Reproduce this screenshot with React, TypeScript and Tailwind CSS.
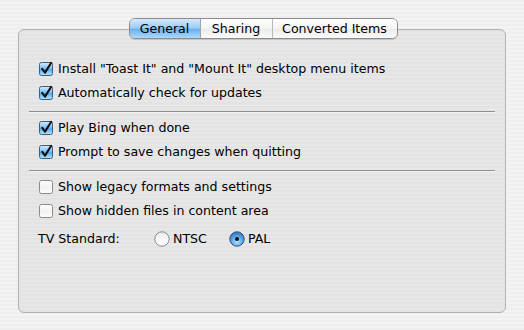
import React from "react";

const font = { fontFamily: '"Lucida Grande", "DejaVu Sans", sans-serif' };

function CheckBox({ checked }: { checked: boolean }) {
  return (
    <svg width="15" height="15" viewBox="0 0 15 15" className="shrink-0 overflow-visible">
      <defs>
        <linearGradient id="cbBlue" x1="0" y1="0" x2="0" y2="1">
          <stop offset="0" stopColor="#d6ecfd" />
          <stop offset="0.45" stopColor="#7fc0f3" />
          <stop offset="0.55" stopColor="#5aa8ec" />
          <stop offset="1" stopColor="#b5e6ff" />
        </linearGradient>
        <linearGradient id="cbWhite" x1="0" y1="0" x2="0" y2="1">
          <stop offset="0" stopColor="#ffffff" />
          <stop offset="0.5" stopColor="#f1f1f1" />
          <stop offset="1" stopColor="#fdfdfd" />
        </linearGradient>
      </defs>
      <rect
        x="0.5"
        y="0.5"
        width="13"
        height="13"
        rx="2"
        fill={checked ? "url(#cbBlue)" : "url(#cbWhite)"}
        stroke={checked ? "#3d5d7e" : "#8a8a8a"}
      />
      {checked && (
        <path d="M3.2 6.8 L6 10.6 L12.2 0.8" fill="none" stroke="#111" strokeWidth="2.1" strokeLinecap="round" strokeLinejoin="round" />
      )}
    </svg>
  );
}

function Radio({ checked }: { checked: boolean }) {
  return (
    <svg width="16" height="16" viewBox="0 0 16 16" className="shrink-0">
      <defs>
        <radialGradient id="rbBlue" cx="0.5" cy="0.7" r="0.6">
          <stop offset="0" stopColor="#b8e4ff" />
          <stop offset="0.6" stopColor="#5ea9ec" />
          <stop offset="1" stopColor="#3b7fcf" />
        </radialGradient>
        <linearGradient id="rbWhite" x1="0" y1="0" x2="0" y2="1">
          <stop offset="0" stopColor="#e9e9e9" />
          <stop offset="0.5" stopColor="#f7f7f7" />
          <stop offset="1" stopColor="#ffffff" />
        </linearGradient>
      </defs>
      <circle cx="8" cy="8" r="7.2" fill={checked ? "url(#rbBlue)" : "url(#rbWhite)"} stroke={checked ? "#2f4f78" : "#8a8a8a"} strokeWidth="1" />
      {checked && <circle cx="8" cy="8" r="2.1" fill="#111" />}
    </svg>
  );
}

function CheckRow({ checked, label }: { checked: boolean; label: string }) {
  return (
    <div className="flex h-[24px] items-center gap-[4px] pl-[10px]">
      <CheckBox checked={checked} />
      <span className="text-[12.6px] text-black">{label}</span>
    </div>
  );
}

function Separator() {
  return <div className="mb-[4px] mt-[6px] h-px bg-[#8f8f8f] shadow-[0_1px_0_#f4f4f4]" />;
}

export default function App() {
  return (
    <div
      style={font}
      className="relative h-[330px] w-[524px] overflow-hidden bg-[repeating-linear-gradient(to_bottom,#eeeeee_0px,#eeeeee_2px,#f3f3f3_2px,#f3f3f3_4px)] pt-[18px]"
    >
      <div className="relative z-10 flex justify-center pl-[2px]">
        <div className="flex h-[21px] w-[269px] overflow-hidden rounded-[6px] border border-[#8c8c8c] pt-[1px] text-[12.6px] text-black shadow-[0_1px_1px_rgba(0,0,0,0.15)]">
          <div className="-mt-[1px] flex w-[71px] items-center justify-center border-r border-[#9aa6b4] bg-[linear-gradient(to_bottom,#d6ebfc_0%,#9ecdf5_45%,#6fb2ee_55%,#a9dafd_100%)] pt-[1px]">
            General
          </div>
          <div className="-mt-[1px] flex w-[72px] items-center justify-center border-r border-[#b9b9b9] bg-[linear-gradient(to_bottom,#ffffff_0%,#f4f4f4_50%,#ececec_55%,#fafafa_100%)] pt-[1px]">
            Sharing
          </div>
          <div className="-mt-[1px] flex flex-1 items-center justify-center bg-[linear-gradient(to_bottom,#ffffff_0%,#f4f4f4_50%,#ececec_55%,#fafafa_100%)] pt-[1px]">
            Converted Items
          </div>
        </div>
      </div>
      <div className="mx-[18px] -mt-[10px] h-[284px] rounded-[6px] border border-[#b1b1b1] bg-[repeating-linear-gradient(to_bottom,#e3e3e3_0px,#e3e3e3_2px,#e7e7e7_2px,#e7e7e7_4px)] px-[10px] pt-[27px]">
        <CheckRow checked label={'Install "Toast It" and "Mount It" desktop menu items'} />
        <CheckRow checked label="Automatically check for updates" />
        <Separator />
        <CheckRow checked label="Play Bing when done" />
        <CheckRow checked label="Prompt to save changes when quitting" />
        <Separator />
        <CheckRow checked={false} label="Show legacy formats and settings" />
        <CheckRow checked={false} label="Show hidden files in content area" />
        <div className="mt-[4px] flex h-[24px] items-center pl-[9px] text-[12.6px] text-black">
          <span className="w-[116px]">TV Standard:</span>
          <div className="flex items-center gap-[3px]">
            <Radio checked={false} />
            <span>NTSC</span>
          </div>
          <div className="ml-[22px] flex items-center gap-[3px]">
            <Radio checked />
            <span>PAL</span>
          </div>
        </div>
      </div>
    </div>
  );
}
